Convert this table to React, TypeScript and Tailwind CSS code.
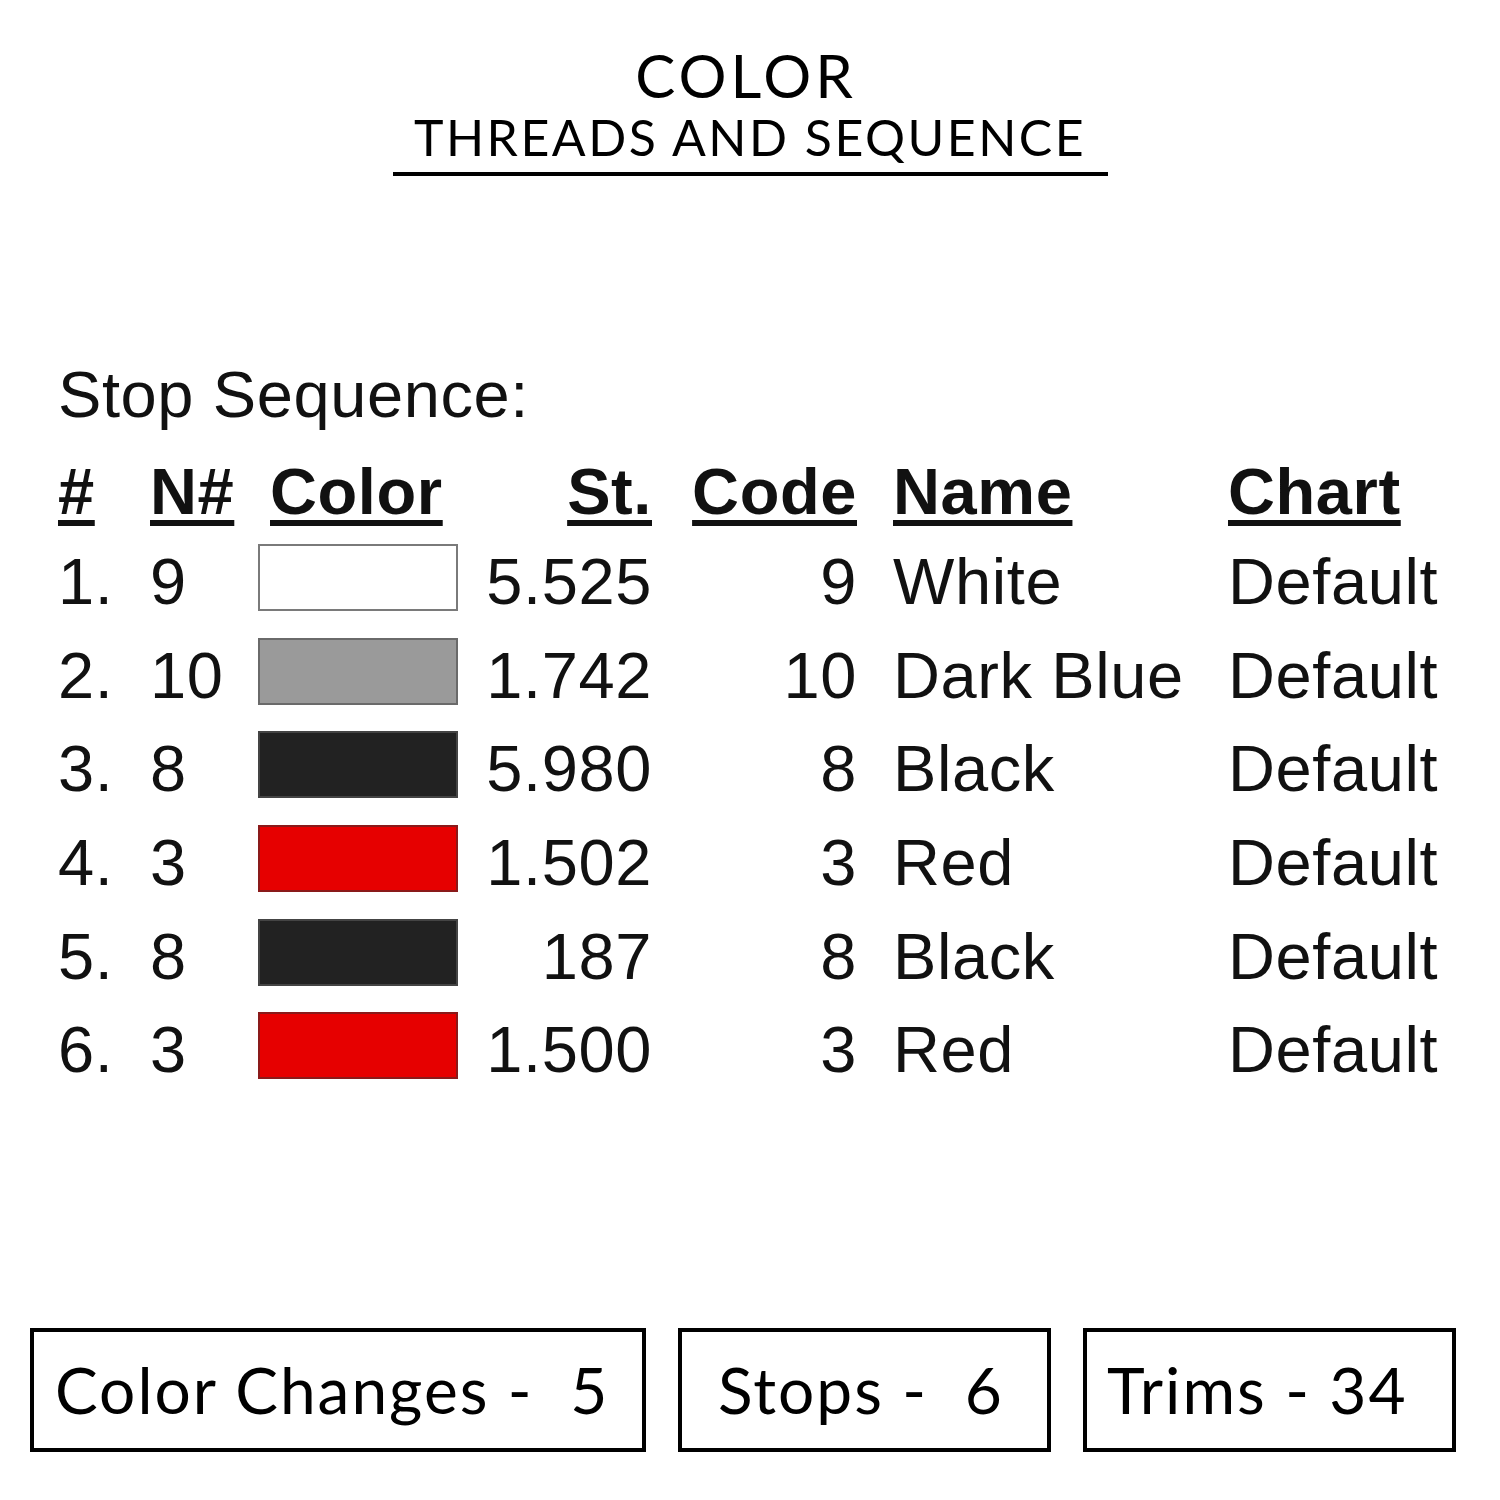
const ROWS = [
  { n: "1.", nn: "9", swatch: "bg-white border-[#7a7a7a]", st: "5.525", code: "9", name: "White" },
  { n: "2.", nn: "10", swatch: "bg-[#9a9a9a] border-[#6a6a6a]", st: "1.742", code: "10", name: "Dark Blue" },
  { n: "3.", nn: "8", swatch: "bg-[#222222] border-[#444444]", st: "5.980", code: "8", name: "Black" },
  { n: "4.", nn: "3", swatch: "bg-[#e60000] border-[#8a1a1a]", st: "1.502", code: "3", name: "Red" },
  { n: "5.", nn: "8", swatch: "bg-[#222222] border-[#444444]", st: "187", code: "8", name: "Black" },
  { n: "6.", nn: "3", swatch: "bg-[#e60000] border-[#8a1a1a]", st: "1.500", code: "3", name: "Red" },
];

const TITLE_FONT = "font-['Lato','Open_Sans',sans-serif]";

function StatBox({ label, width, pad }: { label: string; width: string; pad: string }) {
  return (
    <div className={`${width} ${pad} h-[124px] border-[4px] border-black flex items-center`}>
      <span className={`${TITLE_FONT} text-[64px] leading-none whitespace-pre tracking-[2px] text-black`}>
        {label}
      </span>
    </div>
  );
}

export default function App() {
  return (
    <div className="w-[1500px] h-[1500px] bg-white text-black flex flex-col">
      <div className="flex flex-col items-center pt-[43px]">
        <h1 className={`${TITLE_FONT} text-[60px] leading-[64px] tracking-[4px] pr-[8px]`}>COLOR</h1>
        <div className="w-[715px] border-b-[4px] border-black flex justify-center pt-[4px] pb-[9px]">
          <span className={`${TITLE_FONT} text-[50px] leading-[52px] tracking-[2.5px]`}>
            THREADS AND SEQUENCE
          </span>
        </div>
      </div>

      <div className="pl-[58px] pt-[179px] font-['Liberation_Sans',Arial,sans-serif] text-[65px] text-[#111] tracking-[0.6px]">
        <div className="h-[80px] leading-[80px]">Stop Sequence:</div>
        <div className="flex items-center mt-[18px] h-[78px] font-bold underline decoration-[6px] underline-offset-[6px]">
          <div className="w-[92px]">#</div>
          <div className="w-[108px]">N#</div>
          <div className="w-[200px] pl-[12px]">Color</div>
          <div className="w-[194px] text-right">St.</div>
          <div className="w-[205px] text-right">Code</div>
          <div className="w-[371px] pl-[36px]">Name</div>
          <div>Chart</div>
        </div>
        <div className="flex flex-col">
          {ROWS.map((r, i) => (
            <div key={i} className="flex items-center h-[93.6px] leading-none">
              <div className="w-[92px] pt-[8px]">{r.n}</div>
              <div className="w-[108px] pt-[8px]">{r.nn}</div>
              <div className="w-[200px]">
                <div className={`h-[67px] w-[200px] border-2 ${r.swatch}`} />
              </div>
              <div className="w-[194px] text-right pt-[8px]">{r.st}</div>
              <div className="w-[205px] text-right pt-[8px]">{r.code}</div>
              <div className="w-[371px] pl-[36px] pt-[8px]">{r.name}</div>
              <div className="pt-[8px]">Default</div>
            </div>
          ))}
        </div>
      </div>

      <div className="flex gap-[32px] pl-[30px] mt-auto mb-[48px]">
        <StatBox label="Color Changes -  5" width="w-[616px]" pad="pl-[21px]" />
        <StatBox label="Stops -  6" width="w-[373px]" pad="pl-[36px]" />
        <StatBox label="Trims - 34" width="w-[373px]" pad="pl-[20px]" />
      </div>
    </div>
  );
}
